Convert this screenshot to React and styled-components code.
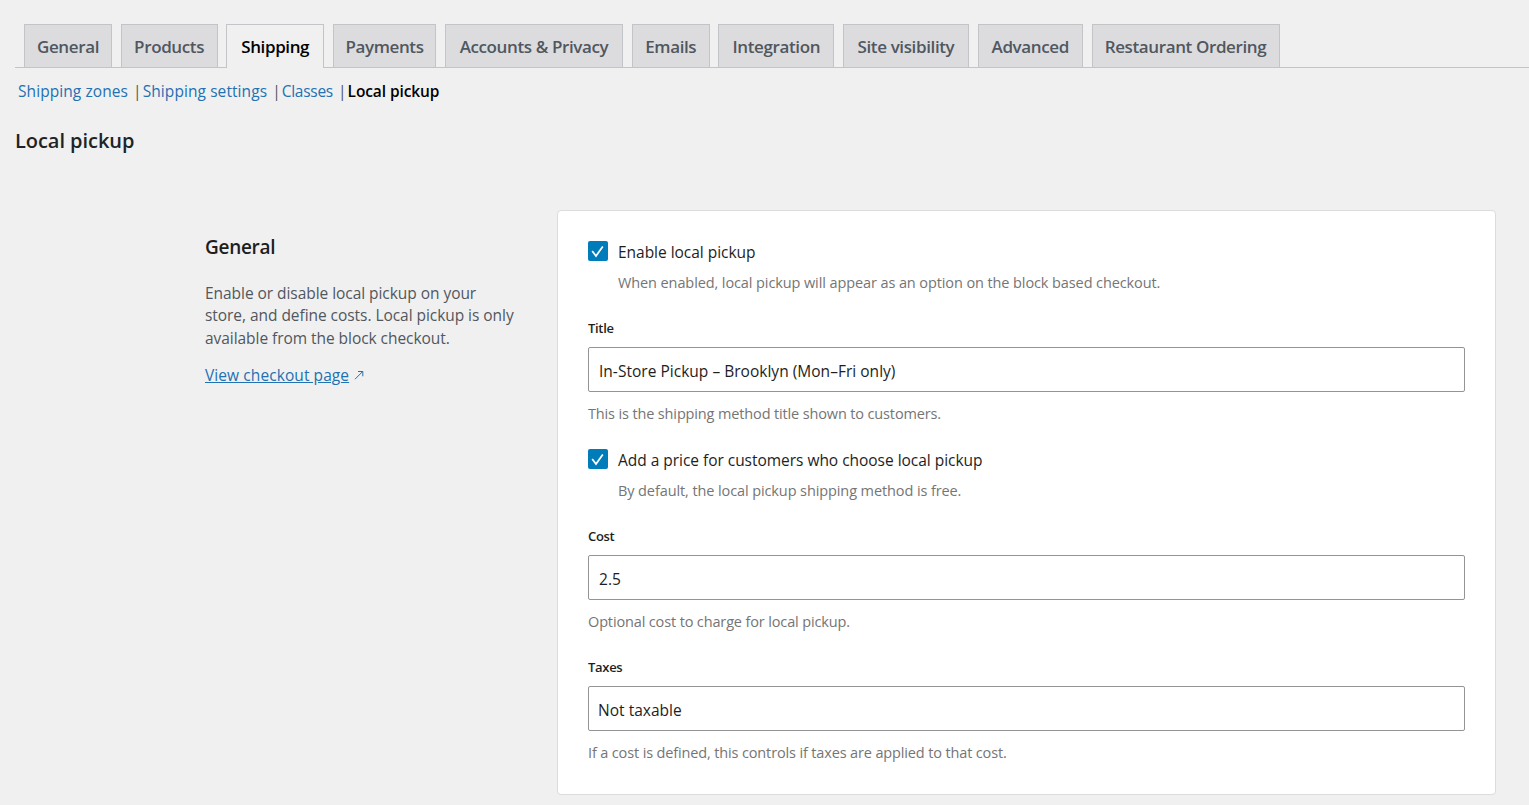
import React from 'react';
import styled, { createGlobalStyle } from 'styled-components';

const GlobalStyle = createGlobalStyle`
  html, body {
    margin: 0;
    padding: 0;
    background: #f0f0f1;
    font-family: "Open Sans", "Noto Sans", "Liberation Sans", sans-serif;
    color: #1e1e1e;
  }
  * { box-sizing: border-box; }
`;

const tabs = [
  { label: 'General', width: 88 },
  { label: 'Products', width: 97 },
  { label: 'Shipping', width: 98, active: true },
  { label: 'Payments', width: 103.4 },
  { label: 'Accounts & Privacy', width: 178.4 },
  { label: 'Emails', width: 78 },
  { label: 'Integration', width: 116 },
  { label: 'Site visibility', width: 126 },
  { label: 'Advanced', width: 105.4 },
  { label: 'Restaurant Ordering', width: 188 },
];

const Check = () => (
  <CheckBox>
    <svg width="20" height="20" viewBox="0 0 20 20" fill="none">
      <path d="M4.2 10 8 15 14.8 5.4" stroke="#fff" strokeWidth="1.7" />
    </svg>
  </CheckBox>
);

const App = () => {
  return (
    <Page>
      <GlobalStyle />
      <TabBar>
        {tabs.map((t) => (
          <Tab key={t.label} $active={t.active} $width={t.width}>
            {t.label}
          </Tab>
        ))}
      </TabBar>
      <SubNav>
        <SubLink>Shipping zones</SubLink>
        <Sep>|</Sep>
        <SubLink>Shipping settings</SubLink>
        <Sep>|</Sep>
        <SubLink $tight>Classes</SubLink>
        <Sep>|</Sep>
        <SubCurrent>Local pickup</SubCurrent>
      </SubNav>
      <PageTitle>Local pickup</PageTitle>
      <Section>
        <Intro>
          <IntroTitle>General</IntroTitle>
          <IntroText>
            Enable or disable local pickup on your store, and define costs. Local pickup is only
            available from the block checkout.
          </IntroText>
          <IntroLink>
            <u>View checkout page</u>
            <svg width="10" height="10" viewBox="0 0 10 10" fill="none">
              <path d="M1 9.2 8.6 1.6M4 1.5H8.8V6.3" stroke="#2271b1" strokeWidth="1" />
            </svg>
          </IntroLink>
        </Intro>
        <Card>
          <CheckRow>
            <Check />
            <CheckLabel>Enable local pickup</CheckLabel>
          </CheckRow>
          <CheckHelp>When enabled, local pickup will appear as an option on the block based checkout.</CheckHelp>

          <FieldLabel>Title</FieldLabel>
          <Input>In-Store Pickup – Brooklyn (Mon–Fri only)</Input>
          <FieldHelp>This is the shipping method title shown to customers.</FieldHelp>

          <CheckRow $top={25}>
            <Check />
            <CheckLabel>Add a price for customers who choose local pickup</CheckLabel>
          </CheckRow>
          <CheckHelp>By default, the local pickup shipping method is free.</CheckHelp>

          <FieldLabel>Cost</FieldLabel>
          <Input>2.5</Input>
          <FieldHelp>Optional cost to charge for local pickup.</FieldHelp>

          <FieldLabel>Taxes</FieldLabel>
          <Input $select>Not taxable</Input>
          <FieldHelp>If a cost is defined, this controls if taxes are applied to that cost.</FieldHelp>
        </Card>
      </Section>
    </Page>
  );
};

const Page = styled.div`
  width: 100%;
  height: 805px;
  padding: 24px 33px 0 15px;
  overflow: hidden;
`;

const TabBar = styled.div`
  display: flex;
  gap: 8.6px;
  height: 44px;
  margin-right: -33px;
  padding-left: 9px;
  border-bottom: 1px solid #c3c4c7;
`;

const Tab = styled.div`
  width: ${({ $width }) => $width}px;
  height: ${({ $active }) => ($active ? 44 : 43)}px;
  display: flex;
  align-items: center;
  justify-content: center;
  white-space: nowrap;
  font-size: 17px;
  font-weight: 600;
  letter-spacing: -0.38px;
  color: ${({ $active }) => ($active ? '#000' : '#50575e')};
  background: ${({ $active }) => ($active ? '#f0f0f1' : '#dcdcde')};
  border: 1px solid #c3c4c7;
  border-bottom: 0;
`;

const SubNav = styled.div`
  display: flex;
  align-items: center;
  height: 24px;
  margin-top: 11px;
  padding-left: 3px;
  font-size: 15.5px;
  letter-spacing: 0.08px;
`;

const SubLink = styled.span`
  color: #2271b1;
  letter-spacing: ${({ $tight }) => ($tight ? '-0.28px' : '0.08px')};
`;

const SubCurrent = styled.span`
  color: #000;
  font-weight: 600;
  letter-spacing: -0.1px;
`;

const Sep = styled.span`
  color: #50575e;
  margin: 0 1px 0 5px;
`;

const PageTitle = styled.h2`
  margin: 23px 0 0;
  height: 30px;
  line-height: 30px;
  font-size: 20px;
  font-weight: 600;
  letter-spacing: -0.05px;
  color: #1d2327;
`;

const Section = styled.div`
  display: grid;
  grid-template-columns: 542px 939px;
  margin-top: 54px;
`;

const Intro = styled.div`
  padding: 24px 0 0 190px;
`;

const IntroTitle = styled.h3`
  margin: 0;
  height: 26px;
  line-height: 26px;
  font-size: 19px;
  font-weight: 600;
  letter-spacing: -0.3px;
  color: #1e1e1e;
`;

const IntroText = styled.p`
  margin: 22px 0 0;
  width: 312px;
  font-size: 15.5px;
  line-height: 22.4px;
  letter-spacing: -0.05px;
  color: #50575e;
`;

const IntroLink = styled.div`
  display: flex;
  align-items: center;
  gap: 5px;
  margin-top: 15px;
  font-size: 15.5px;
  line-height: 22px;
  letter-spacing: 0.08px;
  color: #2271b1;
`;

const Card = styled.div`
  height: 585px;
  padding: 31px 30px 0 30px;
  background: #fff;
  border: 1px solid #dcdcde;
  border-radius: 4px;
`;

const CheckRow = styled.div`
  display: flex;
  align-items: center;
  gap: 10px;
  height: 20px;
  margin-top: ${({ $top }) => $top || 0}px;
`;

const CheckBox = styled.span`
  width: 20px;
  height: 20px;
  margin-bottom: 2px;
  display: flex;
  background: #007cba;
  border-radius: 2px;
`;

const CheckLabel = styled.span`
  font-size: 15.5px;
  letter-spacing: -0.03px;
  color: #1e1e1e;
`;

const CheckHelp = styled.div`
  height: 22px;
  margin-top: 10px;
  padding-left: 30px;
  line-height: 22px;
  font-size: 14.5px;
  letter-spacing: -0.1px;
  color: #757575;
`;

const FieldLabel = styled.div`
  height: 20px;
  margin-top: 24px;
  line-height: 20px;
  font-size: 13px;
  font-weight: 600;
  letter-spacing: -0.3px;
  color: #1e1e1e;
`;

const Input = styled.div`
  height: 45px;
  display: flex;
  align-items: center;
  margin-top: 9px;
  padding: 2px 0 0 ${({ $select }) => ($select ? 9 : 10)}px;
  font-size: 15.5px;
  letter-spacing: 0.02px;
  color: #1e1e1e;
  border: 1px solid #949494;
  border-radius: 2px;
`;

const FieldHelp = styled.div`
  height: 22px;
  margin-top: 11px;
  line-height: 22px;
  font-size: 14.5px;
  letter-spacing: -0.14px;
  color: #757575;
`;

export default App;
